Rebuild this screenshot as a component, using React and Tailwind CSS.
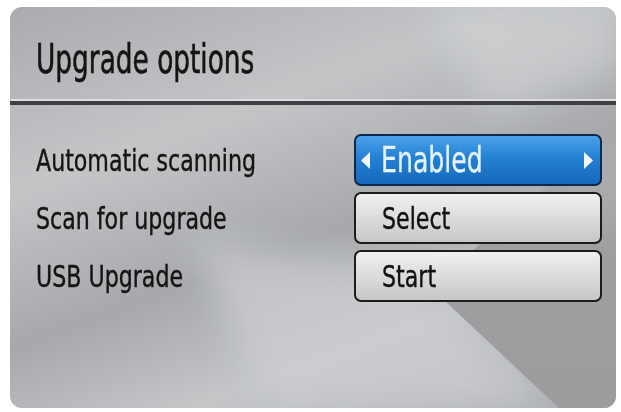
const font = { fontFamily: '"DejaVu Sans Condensed", "DejaVu Sans", sans-serif' };

function Arrow({ dir }) {
  return (
    <svg width="9" height="17" viewBox="0 0 9 17">
      {dir === "left" ? <polygon points="9,0 9,17 0,8.5" fill="#f2f8ff" /> : <polygon points="0,0 0,17 9,8.5" fill="#f2f8ff" />}
    </svg>
  );
}

export default function App() {
  const rows = [
    { label: "Automatic scanning", value: "Enabled", active: true },
    { label: "Scan for upgrade", value: "Select" },
    { label: "USB Upgrade", value: "Start" },
  ];
  return (
    <div className="w-[621px] h-[412px] bg-white pt-[7px] pl-[10px] pr-[5px] pb-[4px]" style={font}>
      <div className="relative w-full h-full rounded-[12px] overflow-hidden flex flex-col bg-[linear-gradient(160deg,#a9abae_0%,#c3c5c7_30%,#a6a8ab_55%,#c4c6c8_75%,#a8aaad_100%)]">
        {/* soft light streaks */}
        <div className="absolute inset-0 blur-[18px]">
          <div className="absolute inset-0 [clip-path:polygon(180px_230px,400px_270px,545px_401px,260px_401px)] bg-[#cdcfd1] opacity-70" />
          <div className="absolute inset-0 [clip-path:polygon(420px_0px,606px_0px,606px_60px,480px_110px)] bg-[#d2d4d6] opacity-60" />
        </div>
        {/* darker corner wedge */}
        <div className="absolute inset-0 [clip-path:polygon(420px_280px,606px_120px,606px_401px,549px_401px)] bg-[linear-gradient(180deg,transparent_0%,transparent_30%,#9d9fa1_60%,#9a9c9e_100%)]" />
        <div className="relative h-[92px] flex items-center pl-[26px] pt-[13px]">
          <span className="text-[41px] text-[#141414] [-webkit-text-stroke:0.6px_#141414] origin-left scale-x-[0.715] inline-block leading-none">Upgrade options</span>
        </div>
        <div className="relative h-[2px] bg-[#dcdde0]" />
        <div className="relative h-[4px] bg-[#3e4042]" />
        <div className="relative flex-1 pt-[29px] pl-[26px] pr-[14px]">
          {rows.map((r) => (
            <div key={r.label} className="flex items-center justify-between h-[52px] mb-[6px]">
              <span className="text-[30px] text-[#141414] [-webkit-text-stroke:0.4px_#141414] origin-left scale-x-[0.82] inline-block">{r.label}</span>
              {r.active ? (
                <div className="w-[248px] h-[52px] rounded-[7px] border-[2px] border-[#0d2848] bg-[linear-gradient(180deg,#4aa2ea_0%,#2480d4_45%,#1669bb_100%)] flex items-center justify-between pl-[5px] pr-[7px]">
                  <div className="flex items-center gap-[11px]">
                    <Arrow dir="left" />
                    <span className="text-[35px] text-[#e3f3ff] [-webkit-text-stroke:0.3px_#e3f3ff] origin-left scale-x-[0.8] inline-block leading-none">{r.value}</span>
                  </div>
                  <Arrow dir="right" />
                </div>
              ) : (
                <div className="w-[248px] h-[52px] rounded-[7px] border-[2px] border-[#1c1c1c] bg-[linear-gradient(180deg,#f0f0f0_0%,#dcdcdc_50%,#c6c6c6_100%)] flex items-center pl-[26px]">
                  <span className="text-[30px] text-[#111] [-webkit-text-stroke:0.4px_#111] origin-left scale-x-[0.82] inline-block">{r.value}</span>
                </div>
              )}
            </div>
          ))}
        </div>
      </div>
    </div>
  );
}
